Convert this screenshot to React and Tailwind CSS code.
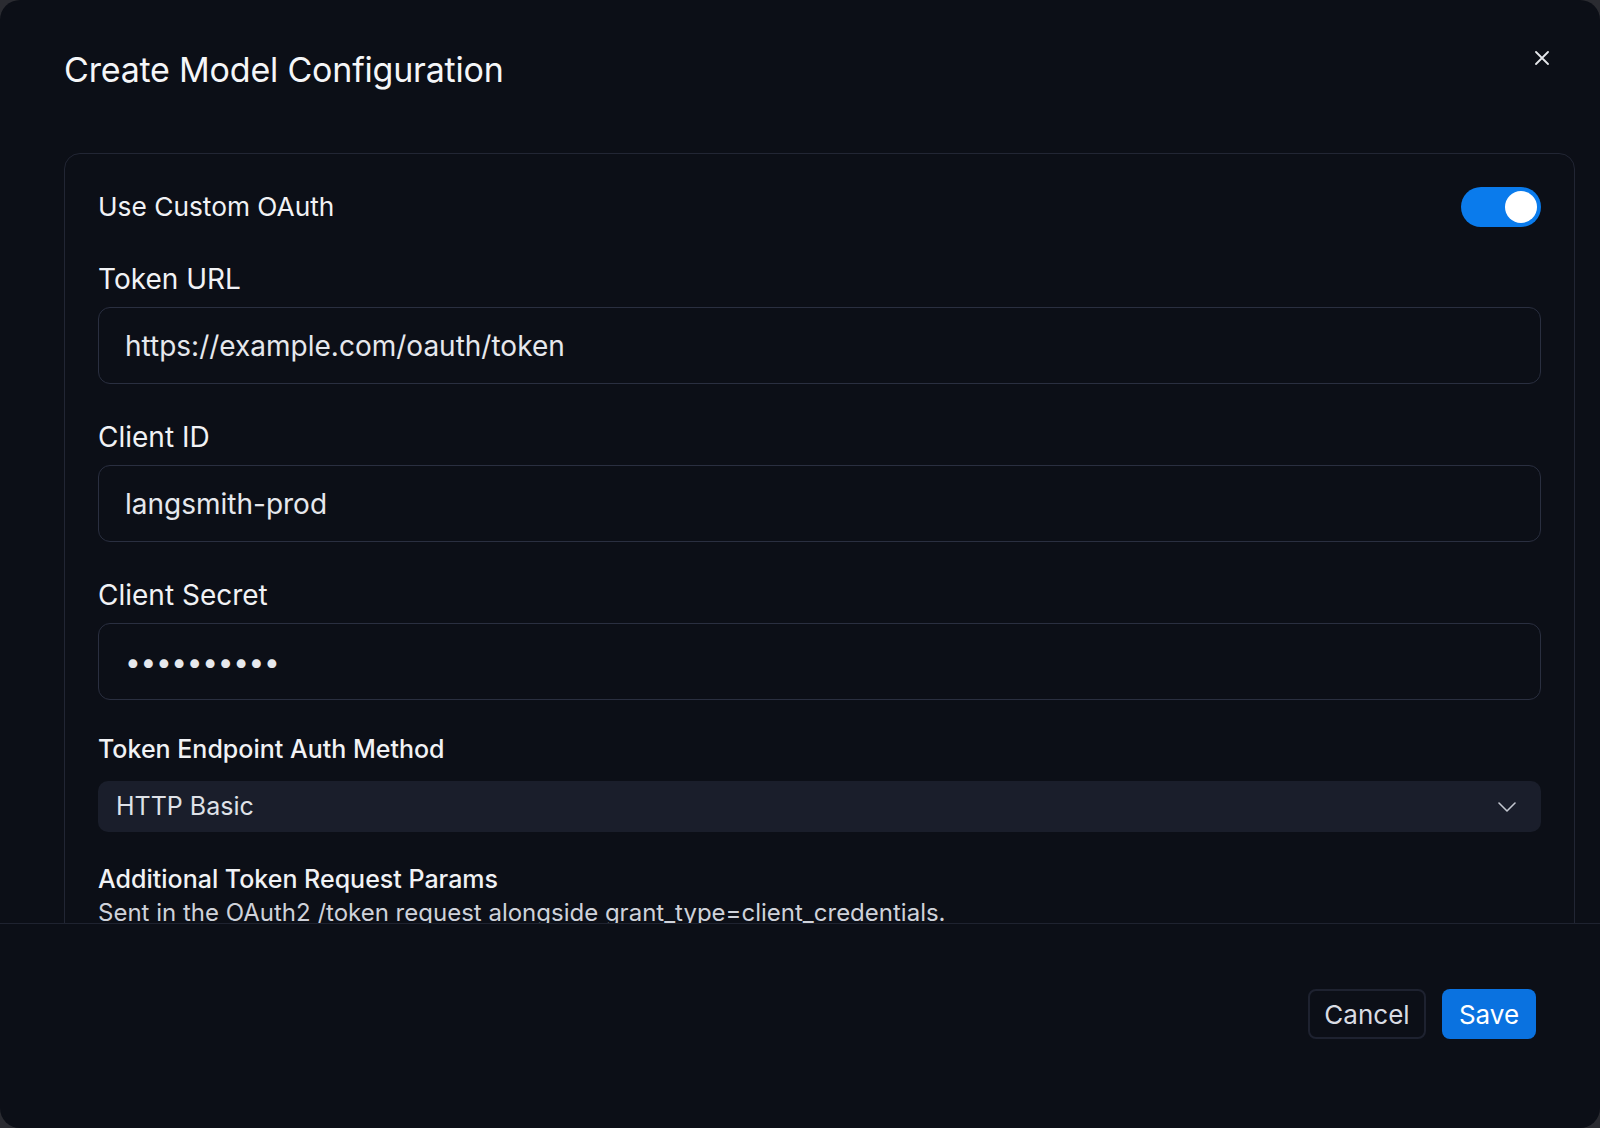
import React from "react";

function Field({ label, value, top }) {
  return (
    <div className={top}>
      <div className="h-[40px] leading-[40px] text-[28px] font-normal text-[#f1f2f5]">{label}</div>
      <div className="mt-[8px] flex h-[77px] items-center rounded-[12px] border border-[#2a2f40] bg-[#0c0f17] px-[26px] text-[28px] text-[#e6e8ed]">
        {value}
      </div>
    </div>
  );
}

export default function App() {
  return (
    <div
      className="h-[1128px] w-[1600px] overflow-hidden bg-[#2a2b31]"
      style={{ fontFamily: "Inter, 'Noto Sans', sans-serif" }}
    >
      <div className="relative flex h-full flex-col overflow-hidden rounded-[20px] bg-[#0c0f17]">
        <div className="h-[153px] shrink-0 pl-[64px] pt-[48px]">
          <h1 className="h-[44px] text-[34px] leading-[44px] font-normal tracking-[-0.2px] text-[#f5f6f8]">
            Create Model Configuration
          </h1>
        </div>
        <button className="absolute right-[51px] top-[51px] h-[14px] w-[14px] text-[#e5e7eb]">
          <svg viewBox="0 0 14 14" width="14" height="14" fill="none" stroke="currentColor" strokeWidth="1.8" strokeLinecap="round">
            <path d="M1 1 L13 13 M13 1 L1 13" />
          </svg>
        </button>

        <div className="h-[770px] shrink-0 overflow-hidden pl-[64px] pr-[25px]">
          <div className="rounded-[16px] border border-[#222634] px-[33px] pt-[33px] pb-[40px]">
            <div className="flex h-[40px] items-center justify-between">
              <span className="text-[26.3px] leading-[42px] text-[#f1f2f5]">Use Custom OAuth</span>
              <div className="flex h-[40px] w-[80px] items-center justify-end rounded-full bg-[#0a7bec] p-[4px]">
                <div className="h-[32px] w-[32px] rounded-full bg-white" />
              </div>
            </div>

            <Field top="mt-[32px]" label="Token URL" value="https://example.com/oauth/token" />
            <Field top="mt-[33px]" label="Client ID" value="langsmith-prod" />
            <Field
              top="mt-[33px]"
              label="Client Secret"
              value={<span className="text-[28px] tracking-[-0.3px]">••••••••••</span>}
            />

            <div className="mt-[29px]">
              <div className="h-[40px] leading-[40px] text-[25px] font-medium text-[#f1f2f5]">Token Endpoint Auth Method</div>
              <div className="mt-[12px] flex h-[51px] items-center justify-between rounded-[10px] bg-[#1a1e2b] pl-[18px] pr-[25px] text-[25px] text-[#dfe2e8]">
                <span>HTTP Basic</span>
                <svg width="18" height="10" viewBox="0 0 18 10" fill="none" stroke="#c3c7d0" strokeWidth="1.6" strokeLinecap="round" strokeLinejoin="round">
                  <path d="M1 1 L9 9 L17 1" />
                </svg>
              </div>
            </div>

            <div className="mt-[31px]">
              <div className="h-[32px] leading-[32px] text-[25px] font-medium text-[#f1f2f5]">Additional Token Request Params</div>
              <div className="mt-[2px] h-[32px] leading-[32px] text-[24px] text-[#cfd2da]">
                Sent in the OAuth2 /token request alongside grant_type=client_credentials.
              </div>
            </div>
          </div>
        </div>

        <div className="flex flex-1 items-start justify-end gap-[16px] border-t border-[#1f2330] pr-[64px] pt-[65px]">
          <button className="h-[50px] w-[118px] rounded-[8px] border-2 border-[#1e2230] text-[26px] text-[#d9dce3]">
            Cancel
          </button>
          <button className="h-[50px] w-[94px] rounded-[8px] bg-[#0a72e0] text-[26px] text-white">
            Save
          </button>
        </div>
      </div>
    </div>
  );
}
